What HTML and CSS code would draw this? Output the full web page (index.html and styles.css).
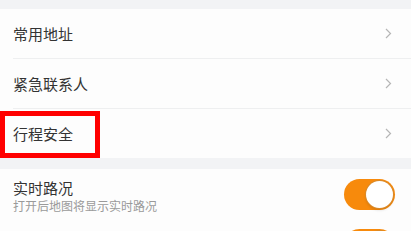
FILE: index.html
```html
<!DOCTYPE html>
<html lang="zh-CN">
<head>
<meta charset="utf-8">
<link rel="stylesheet" href="styles.css">
</head>
<body>
<div class="page">
  <div class="band band-top"></div>
  <div class="group">
    <div class="row link">
      <span class="title">常用地址</span>
      <svg class="chev" width="7" height="11" viewBox="0 0 7 11"><polyline points="1,1 5.5,5.5 1,10" fill="none" stroke="#b5b5b5" stroke-width="1.2"/></svg>
    </div>
    <div class="row link">
      <span class="title">紧急联系人</span>
      <svg class="chev" width="7" height="11" viewBox="0 0 7 11"><polyline points="1,1 5.5,5.5 1,10" fill="none" stroke="#b5b5b5" stroke-width="1.2"/></svg>
    </div>
    <div class="row link last">
      <span class="title">行程安全</span>
      <svg class="chev" width="7" height="11" viewBox="0 0 7 11"><polyline points="1,1 5.5,5.5 1,10" fill="none" stroke="#b5b5b5" stroke-width="1.2"/></svg>
      <div class="highlight"></div>
    </div>
  </div>
  <div class="band band-mid"></div>
  <div class="group">
    <div class="row toggle-row">
      <div class="texts">
        <span class="title">实时路况</span>
        <span class="sub">打开后地图将显示实时路况</span>
      </div>
      <div class="switch"><div class="knob"></div></div>
    </div>
    <div class="row toggle-row">
      <div class="texts">
        <span class="title">夜间模式</span>
      </div>
      <div class="switch"><div class="knob"></div></div>
    </div>
  </div>
</div>
</body>
</html>
```
FILE: styles.css
```css
* { box-sizing: border-box; }
html, body {
  margin: 0;
  padding: 0;
  background: #ffffff;
  overflow: hidden;
}
body {
  width: 416px;
  height: 231px;
  font-family: "Noto Sans CJK SC", "Noto Sans", sans-serif;
}
.page {
  width: 411px;
  background: #fdfdfd;
}
.band { background: #f2f3f5; }
.band-top { height: 9px; }
.band-mid { height: 11px; }
.group {
  background: #fdfdfd;
  padding-left: 13px;
}
.row {
  position: relative;
  display: flex;
  align-items: center;
  justify-content: space-between;
}
.link {
  height: 50px;
  padding-right: 19px;
  border-bottom: 1px solid #eeeff0;
}
.link.last {
  height: 49px;
  border-bottom: none;
}
.title {
  font-size: 15px;
  color: #333333;
  line-height: 20px;
}
.chev { display: block; }
.highlight {
  position: absolute;
  left: -13px;
  top: 2px;
  width: 100px;
  height: 47px;
  border: 5px solid #ff0000;
}
.toggle-row {
  height: 50px;
  padding-right: 16px;
  align-items: flex-start;
}
.texts {
  display: flex;
  flex-direction: column;
  padding-top: 9px;
}
.sub {
  font-size: 12px;
  color: #9a9a9a;
  line-height: 16px;
  margin-top: 0px;
}
.switch {
  width: 51px;
  height: 31px;
  border-radius: 16px;
  background: #f78a0c;
  margin-top: 10px;
  position: relative;
  flex: none;
}
.knob {
  position: absolute;
  right: 2px;
  top: 2px;
  width: 27px;
  height: 27px;
  border-radius: 50%;
  background: #ffffff;
  box-shadow: 0 0 0 1px #d98a2a, 0 2px 3px rgba(0,0,0,0.15);
}
```
